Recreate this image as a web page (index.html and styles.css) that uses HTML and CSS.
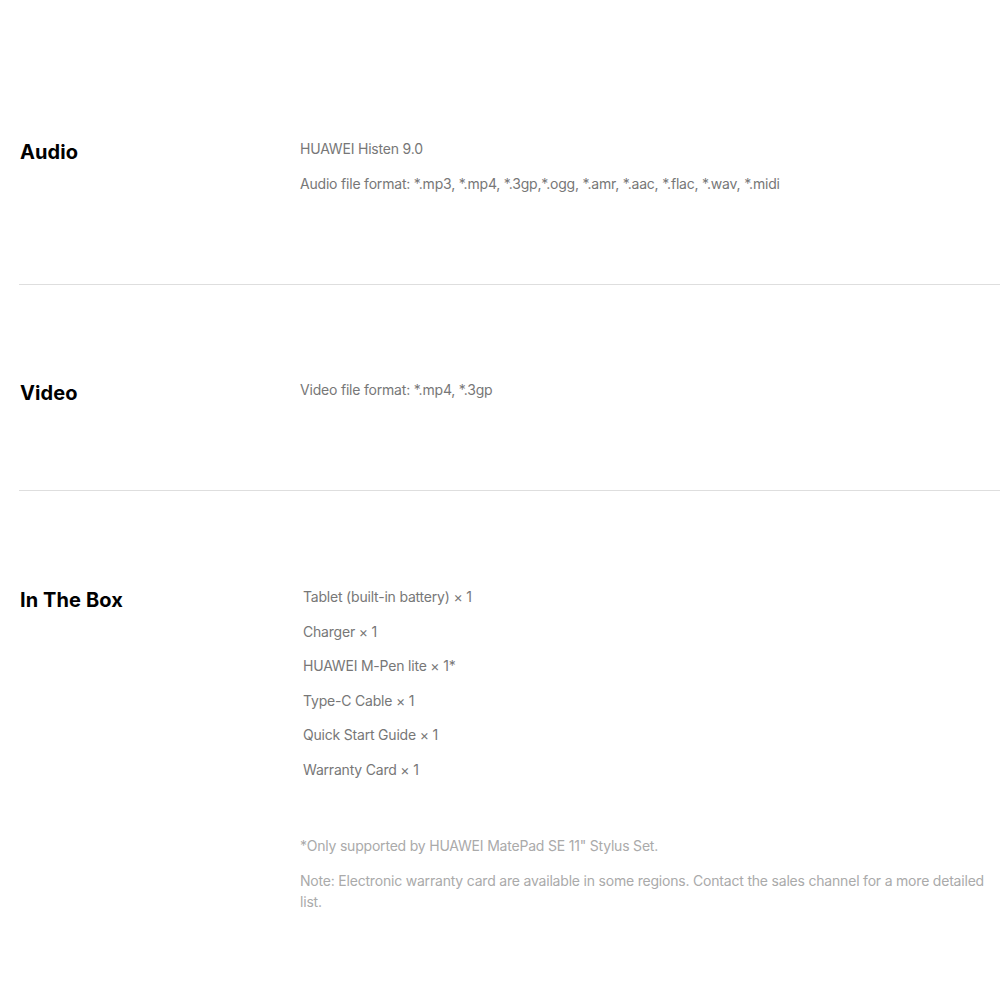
FILE: index.html
```html
<!DOCTYPE html>
<html lang="en">
<head>
<meta charset="utf-8">
<title>Specs</title>
<link rel="stylesheet" href="styles.css">
</head>
<body>
<div class="specs">
  <section class="spec spec-first">
    <h2 class="spec-title">Audio</h2>
    <div class="spec-body">
      <p class="line">HUAWEI Histen 9.0</p>
      <p class="line">Audio file format: *.mp3, *.mp4, *.3gp,*.ogg, *.amr, *.aac, *.flac, *.wav, *.midi</p>
    </div>
  </section>
  <section class="spec spec-mid">
    <h2 class="spec-title">Video</h2>
    <div class="spec-body">
      <p class="line">Video file format: *.mp4, *.3gp</p>
    </div>
  </section>
  <section class="spec spec-last">
    <h2 class="spec-title">In The Box</h2>
    <div class="spec-body">
      <ul class="box-list">
        <li>Tablet (built-in battery) × 1</li>
        <li>Charger × 1</li>
        <li>HUAWEI M-Pen lite × 1*</li>
        <li>Type-C Cable × 1</li>
        <li>Quick Start Guide × 1</li>
        <li>Warranty Card × 1</li>
      </ul>
      <div class="notes">
        <p class="note">*Only supported by HUAWEI MatePad SE 11" Stylus Set.</p>
        <p class="note">Note: Electronic warranty card are available in some regions. Contact the sales channel for a more detailed list.</p>
      </div>
    </div>
  </section>
</div>
</body>
</html>
```
FILE: styles.css
```css
html, body {
  margin: 0;
  padding: 0;
  background: #fff;
}
body {
  font-family: Inter, "Noto Sans", sans-serif;
  color: #777;
}
.specs {
  padding-left: 19px;
}
.spec {
  display: grid;
  grid-template-columns: 281px 1fr;
  align-items: start;
  padding: 95px 0 89px;
  border-bottom: 1px solid #dedede;
}
.spec-first {
  padding-top: 139px;
  padding-bottom: 90px;
}
.spec-mid {
  padding-bottom: 87px;
}
.spec-last {
  padding-top: 96px;
  border-bottom: none;
}
.spec-title {
  margin: 0;
  padding: 3px 0 0 1px;
  font-size: 20px;
  line-height: 20px;
  font-weight: 700;
  color: #000;
  letter-spacing: 0.1px;
}
.spec-body {
  font-size: 14px;
  line-height: 20px;
  letter-spacing: -0.2px;
}
.line {
  margin: 0 0 15px;
}
.line:last-child {
  margin-bottom: 0;
}
.box-list {
  list-style: none;
  margin: 0;
  padding: 0 0 0 3px;
}
.box-list li {
  margin-bottom: 14.6px;
}
.box-list li:last-child {
  margin-bottom: 0;
}
.notes {
  margin-top: 55px;
  color: #aaa;
}
.note {
  margin: 0 0 14px;
  line-height: 21px;
}
```
